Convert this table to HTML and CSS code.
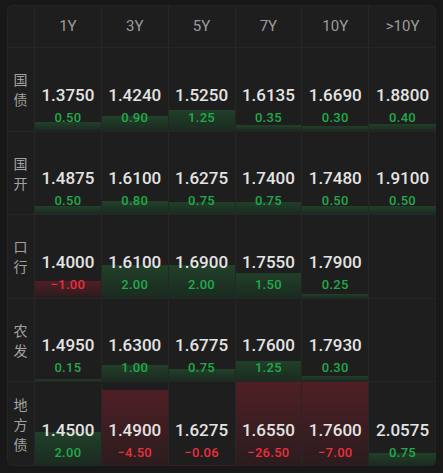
FILE: index.html
```html
<!DOCTYPE html>
<html lang="zh-CN">

<head>
    <meta charset="UTF-8">
    <meta name="viewport" content="width=device-width, initial-scale=1.0">
    <title>收益率矩阵</title>
    <link rel="stylesheet" href="styles.css">
</head>

<body>
    <div class="matrix">
        <div class="head corner"></div>
        <div class="head">1Y</div>
        <div class="head">3Y</div>
        <div class="head">5Y</div>
        <div class="head">7Y</div>
        <div class="head">10Y</div>
        <div class="head last">&gt;10Y</div>

        <div class="label">国<br>债</div>
        <div class="cell up" style="--h:10%"><span class="rate">1.3750</span><span class="chg">0.50</span></div>
        <div class="cell up" style="--h:18%"><span class="rate">1.4240</span><span class="chg">0.90</span></div>
        <div class="cell up" style="--h:25%"><span class="rate">1.5250</span><span class="chg">1.25</span></div>
        <div class="cell up" style="--h:7%"><span class="rate">1.6135</span><span class="chg">0.35</span></div>
        <div class="cell up" style="--h:6%"><span class="rate">1.6690</span><span class="chg">0.30</span></div>
        <div class="cell up last" style="--h:8%"><span class="rate">1.8800</span><span class="chg">0.40</span></div>

        <div class="label">国<br>开</div>
        <div class="cell up" style="--h:10%"><span class="rate">1.4875</span><span class="chg">0.50</span></div>
        <div class="cell up" style="--h:16%"><span class="rate">1.6100</span><span class="chg">0.80</span></div>
        <div class="cell up" style="--h:15%"><span class="rate">1.6275</span><span class="chg">0.75</span></div>
        <div class="cell up" style="--h:15%"><span class="rate">1.7400</span><span class="chg">0.75</span></div>
        <div class="cell up" style="--h:10%"><span class="rate">1.7480</span><span class="chg">0.50</span></div>
        <div class="cell up last" style="--h:10%"><span class="rate">1.9100</span><span class="chg">0.50</span></div>

        <div class="label">口<br>行</div>
        <div class="cell down" style="--h:20%"><span class="rate">1.4000</span><span class="chg">−1.00</span></div>
        <div class="cell up" style="--h:40%"><span class="rate">1.6100</span><span class="chg">2.00</span></div>
        <div class="cell up" style="--h:40%"><span class="rate">1.6900</span><span class="chg">2.00</span></div>
        <div class="cell up" style="--h:30%"><span class="rate">1.7550</span><span class="chg">1.50</span></div>
        <div class="cell up" style="--h:5%"><span class="rate">1.7900</span><span class="chg">0.25</span></div>
        <div class="cell last"></div>

        <div class="label">农<br>发</div>
        <div class="cell up" style="--h:3%"><span class="rate">1.4950</span><span class="chg">0.15</span></div>
        <div class="cell up" style="--h:20%"><span class="rate">1.6300</span><span class="chg">1.00</span></div>
        <div class="cell up" style="--h:15%"><span class="rate">1.6775</span><span class="chg">0.75</span></div>
        <div class="cell up" style="--h:25%"><span class="rate">1.7600</span><span class="chg">1.25</span></div>
        <div class="cell up" style="--h:6%"><span class="rate">1.7930</span><span class="chg">0.30</span></div>
        <div class="cell last"></div>

        <div class="label bottom">地<br>方<br>债</div>
        <div class="cell up bottom" style="--h:40%"><span class="rate">1.4500</span><span class="chg">2.00</span></div>
        <div class="cell down bottom" style="--h:90%"><span class="rate">1.4900</span><span class="chg">−4.50</span></div>
        <div class="cell down bottom" style="--h:1%"><span class="rate">1.6275</span><span class="chg">−0.06</span></div>
        <div class="cell down bottom" style="--h:100%"><span class="rate">1.6550</span><span class="chg">−26.50</span></div>
        <div class="cell down bottom" style="--h:100%"><span class="rate">1.7600</span><span class="chg">−7.00</span></div>
        <div class="cell up bottom last" style="--h:15%"><span class="rate">2.0575</span><span class="chg">0.75</span></div>
    </div>
</body>

</html>
```

FILE: styles.css
```css
body {
    margin: 5px 0 0 7px;
    background: #181818;
    font-family: Roboto, "Noto Sans", "Noto Sans CJK SC", sans-serif;
}

.matrix {
    width: 429px;
    height: 461px;
    display: grid;
    grid-template-columns: 28px repeat(6, 1fr);
    grid-template-rows: 43px repeat(5, 1fr);
    background: #1e1e1e;
    border-radius: 6px;
    overflow: hidden;
    box-shadow: inset 0 0 0 1px #242424;
}

.head {
    display: flex;
    align-items: center;
    justify-content: center;
    color: #9c9c9c;
    font-size: 15px;
    border-right: 1px solid #262626;
    border-bottom: 1px solid #262626;
}

.label {
    display: flex;
    align-items: center;
    justify-content: center;
    text-align: center;
    color: #a2a2a2;
    font-family: "Noto Sans CJK SC", sans-serif;
    font-size: 14px;
    line-height: 20px;
    border-right: 1px solid #262626;
    border-bottom: 1px solid #262626;
}

.cell {
    display: flex;
    flex-direction: column;
    justify-content: flex-end;
    align-items: center;
    padding-bottom: 5px;
    border-right: 1px solid #262626;
    border-bottom: 1px solid #262626;
    background-repeat: no-repeat;
    background-position: bottom;
    background-size: 100% var(--h);
}

.cell.up {
    background-image: linear-gradient(to bottom, #214029, #1b2a20);
}

.cell.down {
    background-image: linear-gradient(to bottom, #4f1f25, #2b1c1e);
}

.last {
    border-right: none;
}

.bottom {
    border-bottom: none;
}

.rate {
    color: #e4e4e4;
    font-size: 17px;
    font-weight: 500;
    line-height: 20px;
    margin-bottom: 4px;
}

.chg {
    font-size: 13px;
    font-weight: 500;
    line-height: 17px;
    letter-spacing: 0.3px;
}

.up .chg {
    color: #1fab4a;
}

.down .chg {
    color: #ea2f3d;
}
```
